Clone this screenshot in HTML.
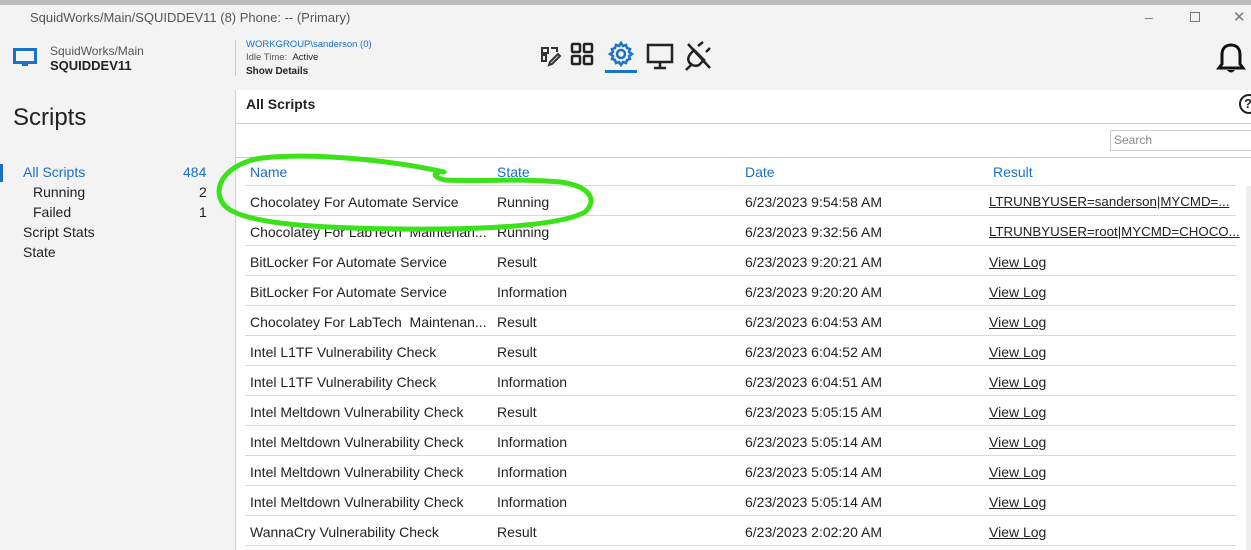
<!DOCTYPE html>
<html><head><meta charset="utf-8"><style>
*{margin:0;padding:0;box-sizing:border-box}
body{width:1251px;height:550px;overflow:hidden;background:#f3f3f3;font-family:"Liberation Sans",sans-serif;position:relative;color:#222}
.a{position:absolute;white-space:nowrap}
.row{position:absolute;left:245px;width:991px;height:30px;border-bottom:1px solid #d8d8d8;font-size:14px}
.row span{position:absolute;top:8px}
.u{text-decoration:underline}
.r{font-size:13.3px}
</style></head><body>
<div class="a" style="left:0;top:0;width:1251px;height:5px;background:#bdbdbd"></div>
<div class="a" style="left:30px;top:10px;font-size:13px;color:#555">SquidWorks/Main/SQUIDDEV11 (8) Phone: -- (Primary)</div>
<div class="a" style="left:1145px;top:9px;font-size:14px;color:#777">&#8211;</div>
<div class="a" style="left:1190px;top:12px;width:10px;height:10px;border:1px solid #777"></div>
<div class="a" style="left:1233px;top:8px;font-size:15px;color:#777">&#10005;</div>
<svg class="a" style="left:13px;top:48px" width="24" height="20" viewBox="0 0 24 20"><rect x="1.5" y="1.5" width="21" height="13" fill="none" stroke="#1a73c8" stroke-width="3"/><rect x="9" y="15" width="6" height="3" fill="#1a73c8"/></svg>
<div class="a" style="left:50px;top:44px;font-size:12px;color:#555">SquidWorks/Main</div>
<div class="a" style="left:50px;top:58px;font-size:13px;font-weight:bold;color:#222">SQUIDDEV11</div>
<div class="a" style="left:235px;top:40px;width:1px;height:36px;background:#ccc"></div>
<div class="a" style="left:246px;top:39px;font-size:9.5px;color:#1a6fc4">WORKGROUP\sanderson (0)</div>
<div class="a" style="left:246px;top:52px;font-size:9.5px;color:#555">Idle Time: &nbsp;<span style="color:#222">Active</span></div>
<div class="a" style="left:246px;top:66px;font-size:10px;font-weight:bold;color:#222">Show Details</div>
<svg class="a" style="left:538px;top:40px" width="190" height="34" viewBox="0 0 190 34">
<g fill="none" stroke="#333" stroke-width="2"><rect x="4" y="8" width="6" height="5"/><rect x="4" y="15" width="4" height="6"/><path d="M12 22 L20 14 L22 16 L14 24 L11 25 Z"/><path d="M13 8 h6 v4"/></g>
<g fill="none" stroke="#222" stroke-width="2.5"><rect x="34" y="4" width="8" height="8" rx="1"/><rect x="46" y="4" width="8" height="8" rx="1"/><rect x="34" y="16" width="8" height="8" rx="1"/><rect x="46" y="16" width="8" height="8" rx="1"/></g>
<g fill="none" stroke="#1a73c8" stroke-width="2.5"><circle cx="83" cy="14" r="4"/><path d="M83 3 l2 3 3-1 1 3 3 1-1 3 3 2-3 2 1 3-3 1-1 3-3-1-2 3-2-3-3 1-1-3-3-1 1-3-3-2 3-2-1-3 3-1 1-3 3 1z"/></g>
<rect x="67" y="30" width="32" height="3" fill="#1a73c8"/>
<g fill="none" stroke="#222" stroke-width="2.5"><rect x="110" y="5" width="24" height="17"/><path d="M122 22 v5 M116 28 h12"/></g>
<g fill="none" stroke="#222" stroke-width="2.5"><path d="M150 4 l22 24 M160 6 l5 -4 M168 12 l4 -4 M156 10 l10 10 -5 5 c-4 2 -8 0 -10 -3 -2 -4 0 -7 5 -12z M148 30 l5-5"/></g>
</svg>
<svg class="a" style="left:1216px;top:42px" width="30" height="34" viewBox="0 0 30 34"><path d="M15 3 c-6 0 -9 4 -9 10 v9 l-3 4 h24 l-3 -4 v-9 c0 -6 -3 -10 -9 -10z" fill="none" stroke="#111" stroke-width="3"/><path d="M11 28 q4 5 8 0" fill="#111"/></svg>
<div class="a" style="left:13px;top:104px;font-size:24px;color:#222">Scripts</div>
<div class="a" style="left:0;top:164px;width:3px;height:18px;background:#1a6fc4"></div>
<div class="a" style="left:23px;top:164px;font-size:14px;color:#1a6fc4">All Scripts</div>
<div class="a" style="left:183px;top:164px;font-size:14px;color:#1a6fc4">484</div>
<div class="a" style="left:33px;top:184px;font-size:14px">Running</div><div class="a" style="left:199px;top:184px;font-size:14px">2</div>
<div class="a" style="left:33px;top:204px;font-size:14px">Failed</div><div class="a" style="left:199px;top:204px;font-size:14px">1</div>
<div class="a" style="left:23px;top:224px;font-size:14px">Script Stats</div>
<div class="a" style="left:23px;top:244px;font-size:14px">State</div>
<div class="a" style="left:235px;top:90px;width:1016px;height:460px;background:#fff;border-left:1px solid #d0d0d0"></div>
<div class="a" style="left:246px;top:96px;font-size:14px;font-weight:bold">All Scripts</div>
<div class="a" style="left:1239px;top:94px;width:20px;height:20px;border:2px solid #222;border-radius:50%;font-size:13px;font-weight:bold;padding-left:3px">?</div>
<div class="a" style="left:235px;top:123px;width:1016px;height:1px;background:#ccc"></div>
<div class="a" style="left:1110px;top:130px;width:150px;height:21px;border:1px solid #ccc;font-size:12px;color:#888;padding:2px 3px">Search</div>
<div class="a" style="left:235px;top:157px;width:1016px;height:1px;background:#ccc"></div>
<div class="a" style="left:1246px;top:186px;width:5px;height:364px;background:#eee"></div>
<div class="row" style="top:156px;height:30px;color:#1a6fc4;font-size:14px"><span style="left:5px;top:8px">Name</span><span style="left:252px;top:8px">State</span><span style="left:500px;top:8px">Date</span><span style="left:748px;top:8px">Result</span></div>
<div class="row" style="top:186px"><span style="left:5px">Chocolatey For Automate Service</span><span style="left:252px">Running</span><span style="left:500px">6/23/2023 9:54:58 AM</span><span class="u r" style="left:744px">LTRUNBYUSER=sanderson|MYCMD=...</span></div>
<div class="row" style="top:216px"><span style="left:5px">Chocolatey For LabTech&nbsp; Maintenan...</span><span style="left:252px">Running</span><span style="left:500px">6/23/2023 9:32:56 AM</span><span class="u r" style="left:744px">LTRUNBYUSER=root|MYCMD=CHOCO...</span></div>
<div class="row" style="top:246px"><span style="left:5px">BitLocker For Automate Service</span><span style="left:252px">Result</span><span style="left:500px">6/23/2023 9:20:21 AM</span><span class="u" style="left:744px">View Log</span></div>
<div class="row" style="top:276px"><span style="left:5px">BitLocker For Automate Service</span><span style="left:252px">Information</span><span style="left:500px">6/23/2023 9:20:20 AM</span><span class="u" style="left:744px">View Log</span></div>
<div class="row" style="top:306px"><span style="left:5px">Chocolatey For LabTech&nbsp; Maintenan...</span><span style="left:252px">Result</span><span style="left:500px">6/23/2023 6:04:53 AM</span><span class="u" style="left:744px">View Log</span></div>
<div class="row" style="top:336px"><span style="left:5px">Intel L1TF Vulnerability Check</span><span style="left:252px">Result</span><span style="left:500px">6/23/2023 6:04:52 AM</span><span class="u" style="left:744px">View Log</span></div>
<div class="row" style="top:366px"><span style="left:5px">Intel L1TF Vulnerability Check</span><span style="left:252px">Information</span><span style="left:500px">6/23/2023 6:04:51 AM</span><span class="u" style="left:744px">View Log</span></div>
<div class="row" style="top:396px"><span style="left:5px">Intel Meltdown Vulnerability Check</span><span style="left:252px">Result</span><span style="left:500px">6/23/2023 5:05:15 AM</span><span class="u" style="left:744px">View Log</span></div>
<div class="row" style="top:426px"><span style="left:5px">Intel Meltdown Vulnerability Check</span><span style="left:252px">Information</span><span style="left:500px">6/23/2023 5:05:14 AM</span><span class="u" style="left:744px">View Log</span></div>
<div class="row" style="top:456px"><span style="left:5px">Intel Meltdown Vulnerability Check</span><span style="left:252px">Information</span><span style="left:500px">6/23/2023 5:05:14 AM</span><span class="u" style="left:744px">View Log</span></div>
<div class="row" style="top:486px"><span style="left:5px">Intel Meltdown Vulnerability Check</span><span style="left:252px">Information</span><span style="left:500px">6/23/2023 5:05:14 AM</span><span class="u" style="left:744px">View Log</span></div>
<div class="row" style="top:516px"><span style="left:5px">WannaCry Vulnerability Check</span><span style="left:252px">Result</span><span style="left:500px">6/23/2023 2:02:20 AM</span><span class="u" style="left:744px">View Log</span></div>
<svg class="a" style="left:0;top:0" width="1251" height="550"><path d="M444 172 C400 162 320 152 262 158 C228 163 212 185 222 202 C232 222 300 228 400 229 C480 230 560 226 585 212 C598 200 590 186 560 182 C520 178 480 182 445 180 C436 178 432 174 438 173" fill="none" stroke="#3be21a" stroke-width="5" stroke-linecap="round"/></svg>
</body></html>
